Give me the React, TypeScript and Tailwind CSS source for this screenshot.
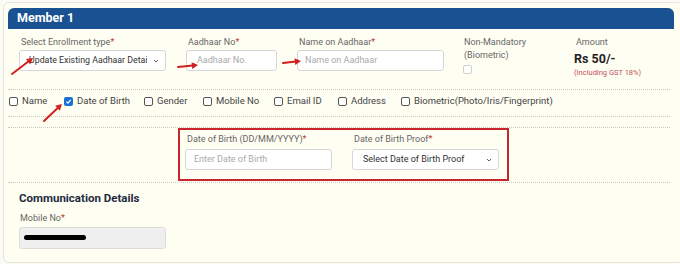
import React from 'react';

const font = { fontFamily: 'Roboto, "Noto Sans", Arial, sans-serif' };

function Req({ children }: { children: React.ReactNode }) {
  return (
    <span>
      {children}
      <span className="text-[#c0392b]">*</span>
    </span>
  );
}

function Chevron() {
  return (
    <svg width="8" height="8" viewBox="0 0 10 10" className="shrink-0 text-[#555]">
      <path d="M2.5 3.8 L5 6.3 L7.5 3.8" fill="none" stroke="currentColor" strokeWidth="1.2" />
    </svg>
  );
}

function Arrow({ x1, y1, x2, y2 }: { x1: number; y1: number; x2: number; y2: number }) {
  const a = Math.atan2(y2 - y1, x2 - x1);
  const h = 7;
  const p1 = [x2 - h * Math.cos(a - 0.5), y2 - h * Math.sin(a - 0.5)];
  const p2 = [x2 - h * Math.cos(a + 0.5), y2 - h * Math.sin(a + 0.5)];
  return (
    <g>
      <line x1={x1} y1={y1} x2={x2 - 3 * Math.cos(a)} y2={y2 - 3 * Math.sin(a)} stroke="#d0201f" strokeWidth="2" strokeLinecap="round" />
      <polygon points={`${x2},${y2} ${p1[0]},${p1[1]} ${p2[0]},${p2[1]}`} fill="#d0201f" />
    </g>
  );
}

function Box({ checked = false, faded = false }: { checked?: boolean; faded?: boolean }) {
  if (checked) {
    return (
      <span className="inline-flex h-[9px] w-[9px] shrink-0 items-center justify-center rounded-[2px] bg-[#1a6fd6]">
        <svg width="7" height="7" viewBox="0 0 10 10">
          <path d="M2 5.2 L4.2 7.4 L8.2 2.8" fill="none" stroke="white" strokeWidth="1.8" />
        </svg>
      </span>
    );
  }
  return (
    <span
      className={`inline-block h-[9px] w-[9px] shrink-0 rounded-[2px] border bg-white ${
        faded ? 'border-[#cfcfcf]' : 'border-[#555]'
      }`}
    />
  );
}

const checks = [
  { label: 'Name', w: 'w-[55px]' },
  { label: 'Date of Birth', w: 'w-[80px]', checked: true },
  { label: 'Gender', w: 'w-[59px]' },
  { label: 'Mobile No', w: 'w-[71px]' },
  { label: 'Email ID', w: 'w-[64px]' },
  { label: 'Address', w: 'w-[63px]' },
  { label: 'Biometric(Photo/Iris/Fingerprint)', w: '' },
];

export default function App() {
  return (
    <div className="relative h-[264px] w-[680px] overflow-hidden bg-[#fbfbf6] pl-[3px] pt-[2px]" style={font}>
      <div className="h-[261px] w-[680px] rounded-[6px] border border-[#e6e6dc] bg-[#fffef3] px-[4px] pt-[5px]">
        <div className="flex h-[21px] w-[666px] items-center rounded-t-[6px] bg-[#1a5192] pl-[9px] text-[12.5px] font-bold text-white">
          Member 1
        </div>

        <div className="flex pl-[11px] pt-[7px] text-[9px] text-[#666]">
          <div className="w-[147px]">
            <div className="h-[14px] pl-[2px]"><Req>Select Enrollment type</Req></div>
            <div className="flex h-[21px] items-center justify-between gap-[3px] overflow-hidden rounded-[3px] border border-[#d6d6d6] bg-white pl-[9px] pr-[5px] text-[8.8px] text-[#333]">
              <span className="overflow-hidden whitespace-nowrap">Update Existing Aadhaar Detai</span>
              <Chevron />
            </div>
          </div>
          <div className="ml-[20px] w-[91px]">
            <div className="h-[14px] pl-[2px]"><Req>Aadhaar No</Req></div>
            <div className="flex h-[21px] items-center rounded-[3px] border border-[#d6d6d6] bg-white pl-[10px] text-[9px] text-[#aaa]">
              Aadhaar No.
            </div>
          </div>
          <div className="ml-[20px] w-[147px]">
            <div className="h-[14px] pl-[2px]"><Req>Name on Aadhaar</Req></div>
            <div className="flex h-[21px] items-center rounded-[3px] border border-[#d6d6d6] bg-white pl-[7px] text-[9px] text-[#aaa]">
              Name on Aadhaar
            </div>
          </div>
          <div className="ml-[19px] w-[110px] leading-[12.5px]">
            <div className="pl-[1px]">Non-Mandatory</div>
            <div className="pl-[1px]">(Biometric)</div>
            <div className="mt-[4px]"><Box faded /></div>
          </div>
          <div className="ml-[1px]">
            <div className="h-[14px] pl-[2px]">Amount</div>
            <div className="text-[12.5px] font-bold leading-[17px] text-[#222]">Rs 50/-</div>
            <div className="text-[7.5px] text-[#c0505a]">(Including GST 18%)</div>
          </div>
        </div>

        <div className="mt-[11px] w-[662px] border-t border-dotted border-[#c9c9c0]" />

        <div className="flex h-[22px] items-center pl-[1px] text-[9.5px] text-[#444]">
          {checks.map((c) => (
            <div key={c.label} className={`flex items-center gap-[4px] ${c.w}`}>
              <Box checked={c.checked} />
              <span className="whitespace-nowrap">{c.label}</span>
            </div>
          ))}
        </div>

        <div className="mt-[4px] w-[662px] border-t border-dotted border-[#c9c9c0]" />
        <div className="mt-[10px] w-[662px] border-t border-dotted border-[#c9c9c0]" />

        <div className="ml-[170px] flex h-[53px] w-[331px] gap-[20px] border-2 border-[#c8262c] pl-[5px] pt-[3px] text-[9px] text-[#666]">
          <div className="w-[147px]">
            <div className="h-[16px] pl-[2px]"><Req>Date of Birth (DD/MM/YYYY)</Req></div>
            <div className="flex h-[21px] items-center rounded-[3px] border border-[#d6d6d6] bg-white pl-[8px] text-[9px] text-[#aaa]">
              Enter Date of Birth
            </div>
          </div>
          <div className="w-[147px]">
            <div className="h-[16px] pl-[2px]"><Req>Date of Birth Proof</Req></div>
            <div className="flex h-[21px] items-center justify-between overflow-hidden rounded-[3px] border border-[#d6d6d6] bg-white pl-[10px] pr-[5px] text-[9px] text-[#333]">
              <span className="whitespace-nowrap">Select Date of Birth Proof</span>
              <Chevron />
            </div>
          </div>
        </div>
        <div className="mt-[1px] w-[662px] border-t border-dotted border-[#c9c9c0]" />

        <div className="pl-[11px] pt-[7px]">
          <div className="text-[11.5px] font-bold text-[#232b3e]">Communication Details</div>
          <div className="mt-[4px] h-[14px] pl-[1px] text-[9px] text-[#666]"><Req>Mobile No</Req></div>
          <div className="mt-[1px] flex h-[22px] w-[147px] items-center rounded-[3px] border border-[#dcdcdc] bg-[#efefef] pl-[4px]">
            <span className="block h-[5px] w-[62px] rounded-full bg-black" />
          </div>
        </div>
      </div>

      <svg className="pointer-events-none absolute left-0 top-0" width="680" height="264">
        <Arrow x1={12} y1={74} x2={33} y2={58} />
        <Arrow x1={178} y1={67} x2={198} y2={65} />
        <Arrow x1={283} y1={63} x2={301} y2={61} />
        <Arrow x1={44} y1={121} x2={62} y2={104} />
      </svg>
    </div>
  );
}
